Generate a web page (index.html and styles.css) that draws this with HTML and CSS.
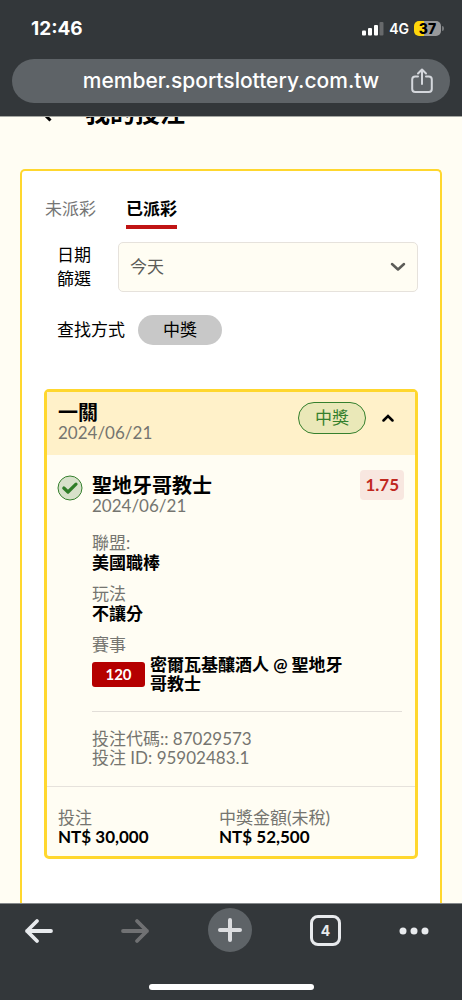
FILE: index.html
```html
<!DOCTYPE html>
<html lang="zh-Hant">
<head>
<meta charset="utf-8">
<meta name="viewport" content="width=device-width, initial-scale=1">
<title>我的投注</title>
<link rel="stylesheet" href="styles.css">
</head>
<body>
<header class="chrome">
  <div class="status">
    <span class="clock">12:46</span>
    <div class="indicators">
      <svg class="signal" width="22" height="14" viewBox="0 0 22 14" aria-hidden="true">
        <rect x="0" y="8.500" width="4" height="5" rx="1"/><rect x="6" y="6" width="4" height="7.500" rx="1"/><rect x="12" y="3" width="4" height="10.500" rx="1"/><rect class="dim" x="17.500" y="0" width="4" height="13.500" rx="1"/>
      </svg>
      <span class="network">4G</span>
      <span class="battery"><span class="level">37</span><span class="cap"></span></span>
    </div>
  </div>
  <div class="address">
    <span class="url">member.sportslottery.com.tw</span>
    <button class="share" type="button" aria-label="分享">
      <svg width="22" height="26" viewBox="0 0 22 26" fill="none" stroke="#d4d7dc" stroke-width="2" stroke-linecap="round" stroke-linejoin="round"><path d="M7 8.500H4.200A3 3 0 0 0 1.200 11.500V21A3 3 0 0 0 4.200 24H17.800A3 3 0 0 0 20.800 21V11.500A3 3 0 0 0 17.800 8.500H15M11 16V1.500M7 5.500L11 1.500L15 5.500"/></svg>
    </button>
  </div>
</header>

<main class="page">
  <div class="page-title">
    <button class="back" type="button" aria-label="返回">
      <svg width="12" height="20" viewBox="0 0 12 20" fill="none" stroke="#000" stroke-width="3"><path d="M10.500 1.500L2 10L10.500 18.500"/></svg>
    </button>
    <h1>我的投注</h1>
  </div>

  <section class="panel">
    <nav class="tabs">
      <button class="tab" type="button">未派彩</button>
      <button class="tab active" type="button">已派彩</button>
    </nav>

    <div class="filter">
      <label class="date-label" for="date">日期<br>篩選</label>
      <div class="select">
        <select id="date"><option>今天</option></select>
        <svg class="arrow" width="16" height="10" viewBox="0 0 16 10" fill="none" stroke="#5c5c58" stroke-width="2.500" stroke-linecap="round" stroke-linejoin="round"><path d="M2 2L8 7.500L14 2"/></svg>
      </div>
    </div>

    <div class="search">
      <span>查找方式</span>
      <button class="chip" type="button">中獎</button>
    </div>

    <article class="ticket">
      <header class="ticket-head">
        <div class="heading">
          <h2>一關</h2>
          <span class="muted">2024/06/21</span>
        </div>
        <span class="won">中獎</span>
        <button class="toggle" type="button" aria-label="收合">
          <svg width="12" height="8" viewBox="0 0 12 8" fill="none" stroke="#000" stroke-width="2.500" stroke-linecap="round"><path d="M1.500 6.500L6 2L10.500 6.500"/></svg>
        </button>
      </header>

      <div class="bet">
        <svg class="check" width="26" height="26" viewBox="0 0 26 26" fill="none"><circle cx="13" cy="13" r="12" fill="#d7e1ca" stroke="#35802d"/><path d="M6.800 13L11 17L19 9.200" stroke="#2f7d28" stroke-width="3.200" stroke-linecap="round" stroke-linejoin="round"/></svg>
        <div class="detail">
          <div class="team">
            <div class="heading">
              <h2>聖地牙哥教士</h2>
              <span class="muted">2024/06/21</span>
            </div>
            <span class="odds">1.75</span>
          </div>
          <dl class="facts">
            <div><dt>聯盟:</dt><dd>美國職棒</dd></div>
            <div><dt>玩法</dt><dd>不讓分</dd></div>
            <div><dt>賽事</dt><dd class="match"><span class="number">120</span><span class="names">密爾瓦基釀酒人 @ 聖地牙哥教士</span></dd></div>
          </dl>
          <div class="codes">
            <span>投注代碼:: 87029573</span>
            <span>投注 ID: 95902483.1</span>
          </div>
        </div>
      </div>

      <dl class="totals">
        <div><dt>投注</dt><dd>NT$ 30,000</dd></div>
        <div><dt>中獎金額(未稅)</dt><dd>NT$ 52,500</dd></div>
      </dl>
    </article>
  </section>
</main>

<footer class="toolbar">
  <div class="buttons">
    <button type="button" aria-label="上一頁"><svg width="30" height="26" viewBox="0 0 30 26" fill="none" stroke="#e8eaed" stroke-width="3.800" stroke-linecap="round" stroke-linejoin="round"><path d="M27 13H3M13 3L3 13L13 23"/></svg></button>
    <button type="button" aria-label="下一頁" disabled><svg width="30" height="26" viewBox="0 0 30 26" fill="none" stroke="#707173" stroke-width="3.800" stroke-linecap="round" stroke-linejoin="round"><path d="M3 13H27M17 3L27 13L17 23"/></svg></button>
    <button class="new-tab" type="button" aria-label="新分頁"><svg width="24" height="24" viewBox="0 0 24 24" fill="none" stroke="#dcdde0" stroke-width="4" stroke-linecap="round"><path d="M2 12H22M12 2V22"/></svg></button>
    <button type="button" aria-label="分頁"><span class="tab-count">4</span></button>
    <button class="more" type="button" aria-label="更多"><svg width="30" height="8" viewBox="0 0 30 8" fill="#e8eaed"><circle cx="4" cy="4" r="3.500"/><circle cx="15" cy="4" r="3.500"/><circle cx="26" cy="4" r="3.500"/></svg></button>
  </div>
  <div class="home-bar"></div>
</footer>
</body>
</html>
```

FILE: styles.css
```css
* { box-sizing: border-box; }

body {
  margin: 0;
  height: 100vh;
  display: flex;
  flex-direction: column;
  font: 17px/20px Lato, "Noto Sans CJK TC", sans-serif;
  color: #000;
  background: #fffdf3;
}

button {
  font: inherit;
  color: inherit;
  background: none;
  border: 0;
  padding: 0;
}

svg { display: block; flex: none; }
h1, h2, dl, dd { margin: 0; }

/* Browser header */
.chrome {
  flex: none;
  padding: 16px 12px 13px;
  background: #33373a;
  border-bottom: 1px solid #a5a7a2;
  color: #fff;
  font-family: Inter, sans-serif;
}

.status {
  display: flex;
  justify-content: space-between;
  align-items: center;
  height: 25px;
  margin-bottom: 18px;
  padding: 0 6px 0 19px;
}

.clock { font-size: 19px; font-weight: 700; }
.indicators { display: flex; align-items: center; gap: 5px; }
.signal { fill: #fff; }
.signal .dim { fill: #67696b; }
.network { font-size: 14px; font-weight: 600; }

.battery { display: flex; align-items: center; gap: 1px; }
.level {
  width: 27px;
  height: 15px;
  border-radius: 5px;
  background: linear-gradient(90deg, #ffd60a 37%, #98999b 37%);
  color: #000;
  font-size: 14px;
  font-weight: 800;
  line-height: 15px;
  text-align: center;
}
.cap { width: 2px; height: 5px; border-radius: 0 2px 2px 0; background: #77797b; }

.address {
  display: flex;
  align-items: center;
  height: 44px;
  padding: 0 17px;
  border-radius: 22px;
  background: #5e6367;
}
.url {
  flex: 1;
  padding-left: 22px;
  font-size: 21px;
  font-weight: 500;
  text-align: center;
}

/* Page */
.page {
  flex: 1;
  min-height: 0;
  overflow: hidden;
  display: flex;
  flex-direction: column;
  padding: 0 20px;
}

.page-title {
  flex: none;
  display: flex;
  align-items: center;
  gap: 33px;
  height: 32px;
  margin: -21px 0 41px;
  padding-left: 20px;
}
h1 { font-size: 25px; line-height: 32px; font-weight: 700; }

.panel {
  flex: 1 0 auto;
  padding: 26px 22px 60px;
  border: 2px solid #ffd72e;
  border-bottom: 0;
  border-radius: 5px 5px 0 0;
  background: #fff;
}

.tabs { display: flex; gap: 30px; margin-bottom: 13px; padding-left: 1px; }
.tab {
  padding: 2px 0 6px;
  border-bottom: 4px solid transparent;
  line-height: 20px;
  color: #757575;
}
.tab.active { color: #000; font-weight: 700; border-color: #c01414; }

.filter { display: flex; align-items: center; padding-left: 13px; }
.date-label { width: 61px; line-height: 24px; }
.select { position: relative; flex: 1; }
.select select {
  display: block;
  appearance: none;
  width: 100%;
  height: 50px;
  padding: 0 11px;
  border: 1px solid #e6e2dc;
  border-radius: 5px;
  background: #fffdf3;
  color: #5c5c58;
  font: inherit;
}
.arrow { position: absolute; right: 12px; top: 20px; pointer-events: none; }

.search { display: flex; align-items: center; gap: 13px; margin-top: 23px; padding-left: 13px; }
.chip { width: 84px; height: 30px; border-radius: 15px; background: #c8c8c8; }

/* Ticket */
.ticket {
  margin-top: 44px;
  border: 3px solid #ffd72e;
  border-radius: 5px;
  background: #fffdf3;
}

.ticket-head {
  display: flex;
  align-items: flex-start;
  padding: 10px 21px 12px 11px;
  background: #fff1c9;
}
.heading { flex: 1; display: flex; flex-direction: column; }
h2 { font-size: 20px; line-height: 21px; font-weight: 700; }
.muted, dt, .codes { color: #757570; }

.won {
  width: 68px;
  height: 32px;
  margin-right: 16px;
  border: 1px solid #35802d;
  border-radius: 16px;
  background: #eae8b8;
  color: #35802d;
  line-height: 30px;
  text-align: center;
}
.toggle { display: grid; place-items: center; height: 32px; }

.bet { display: flex; gap: 9px; padding: 15px 11px 19px 10px; }
.check { margin-top: 5px; }
.detail { flex: 1; }
.team { display: flex; }
.team .heading { padding-top: 5px; }
.odds {
  height: 30px;
  padding: 0 5px;
  border-radius: 4px;
  background: #f8e7e0;
  color: #c0281f;
  font-weight: 700;
  line-height: 30px;
}

.facts {
  display: flex;
  flex-direction: column;
  gap: 10px;
  padding: 16px 0 18px;
  margin-right: 2px;
  border-bottom: 1px solid #e2ded8;
}
.facts dt { line-height: 21px; }
dd { font-weight: 700; }
.match { display: flex; align-items: center; gap: 5px; }
.number {
  width: 53px;
  border-radius: 3px;
  background: #b50000;
  color: #fff;
  font-size: 15px;
  line-height: 25px;
  text-align: center;
}
.names { flex: 1; max-width: 200px; line-height: 19px; }

.codes { display: flex; flex-direction: column; padding-top: 17px; line-height: 19px; }

.totals {
  display: grid;
  grid-template-columns: 161px 1fr;
  padding: 21px 11px 10px;
  border-top: 1px solid #e6e2dc;
  line-height: 19px;
}

/* Browser toolbar */
.toolbar {
  flex: none;
  display: flex;
  flex-direction: column;
  align-items: center;
  gap: 31px;
  padding: 4px 0 10px;
  background: #33373a;
  border-top: 1px solid #85888a;
}
.buttons {
  width: 100%;
  display: flex;
  justify-content: space-between;
  padding: 0 33px 0 17px;
}
.buttons button {
  display: grid;
  place-items: center;
  width: 44px;
  height: 45px;
}
.buttons .new-tab {
  height: 44px;
  border-radius: 50%;
  background: #5e6367;
}
.buttons .more { width: 30px; }
.tab-count {
  display: block;
  width: 31px;
  height: 31px;
  border: 3px solid #e8eaed;
  border-radius: 8px;
  color: #e8eaed;
  font: 700 14px/25px Inter, sans-serif;
}
.home-bar { width: 165px; height: 6px; border-radius: 3px; background: #fff; }
```
